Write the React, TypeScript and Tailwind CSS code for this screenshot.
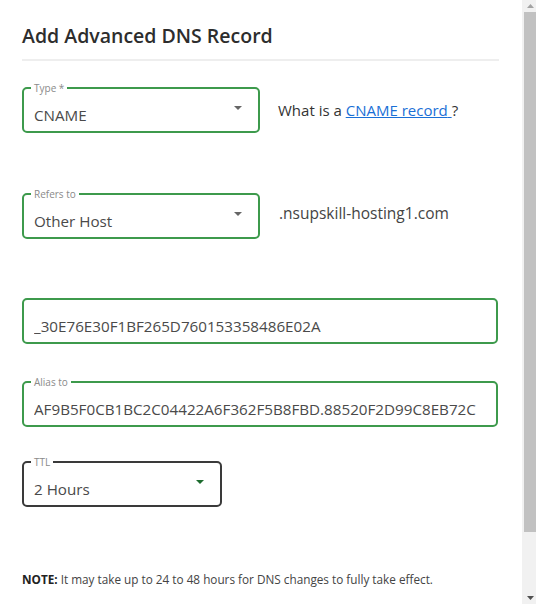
import React from 'react';

const font = { fontFamily: '"Open Sans", "Liberation Sans", sans-serif' };

// small dropdown caret
const Caret = ({ color = '#666666' }: { color?: string }) => (
  <svg width="8" height="4" viewBox="0 0 8 4" className="shrink-0">
    <path d="M0 0 L8 0 L4 4 Z" fill={color} />
  </svg>
);

interface FieldProps {
  label?: string;
  value: string;
  select?: boolean;
  caretColor?: string;
  className?: string;
}

const Field: React.FC<FieldProps> = ({ label, value, select, caretColor, className = '' }) => (
  <div
    className={`relative flex h-[46px] items-center rounded-[5px] border-2 pl-[10px] pr-[16px] ${className}`}
  >
    {label && (
      <span className="absolute -top-[7px] left-[7px] bg-white px-[3px] text-[10px] leading-[12px] text-[#8a8a8a]">
        {label}
      </span>
    )}
    <span className="flex-1 overflow-hidden whitespace-nowrap pt-[9px] text-[15.2px] leading-[20px] text-[#4a4a4a]">
      {value}
    </span>
    {select && (
      <span className="mb-[4px] ml-2">
        <Caret color={caretColor} />
      </span>
    )}
  </div>
);

export default function App() {
  return (
    <div className="flex h-[604px] w-[536px] overflow-hidden bg-white" style={font}>
      <div className="w-[522px] pl-[22px] pr-[24px] pt-[22px]">
        <h2 className="text-[19.5px] font-semibold leading-[28px] text-[#2d2d2d]">Add Advanced DNS Record</h2>
        <div className="mt-[9px] h-[2px] w-[477px] bg-[#eeeeee]" />

        <div className="mt-[26px] flex items-center">
          <Field label="Type *" value="CNAME" select className="w-[238px] border-[#3d9a4c]" />
          <p className="ml-[18px] text-[15px] text-[#333333]">
            What is a{' '}
            <a href="#" className="text-[#1a6fd6] underline">
              CNAME record{' '}
            </a>
            ?
          </p>
        </div>

        <div className="mt-[60px] flex items-center">
          <Field label="Refers to" value="Other Host" select className="w-[238px] border-[#3d9a4c]" />
          <p className="mb-[4px] ml-[19px] text-[15.5px] text-[#444444]">.nsupskill-hosting1.com</p>
        </div>

        <Field value="_30E76E30F1BF265D760153358486E02A" className="mt-[59px] w-[476px] border-[#3d9a4c]" />

        <Field
          label="Alias to"
          value="AF9B5F0CB1BC2C04422A6F362F5B8FBD.88520F2D99C8EB72C"
          className="mt-[37px] w-[476px] border-[#3d9a4c] !pr-[8px]"
        />

        <Field label="TTL" value="2 Hours" select caretColor="#1d6b2e" className="mt-[34px] w-[200px] border-[#3a3a3a]" />

        <p className="mt-[64px] text-[11.75px] leading-[16px] text-[#444444]">
          <span className="font-bold text-[#222222]">NOTE:</span> It may take up to 24 to 48 hours for DNS changes to fully
          take effect.
        </p>
      </div>

      {/* scrollbar */}
      <div className="flex w-[14px] flex-col bg-[#f1f1f1]">
        <div className="flex h-[12px] items-center justify-center pl-[2px]">
          <svg width="7" height="4" viewBox="0 0 7 4">
            <path d="M3.5 0 L7 4 L0 4 Z" fill="#a3a3a3" />
          </svg>
        </div>
        <div className="ml-[2px] h-[520px] bg-[#c1c1c1]" />
        <div className="flex-1" />
        <div className="flex h-[12px] items-center justify-center pl-[2px]">
          <svg width="7" height="4" viewBox="0 0 7 4">
            <path d="M0 0 L7 0 L3.5 4 Z" fill="#505050" />
          </svg>
        </div>
      </div>
    </div>
  );
}
